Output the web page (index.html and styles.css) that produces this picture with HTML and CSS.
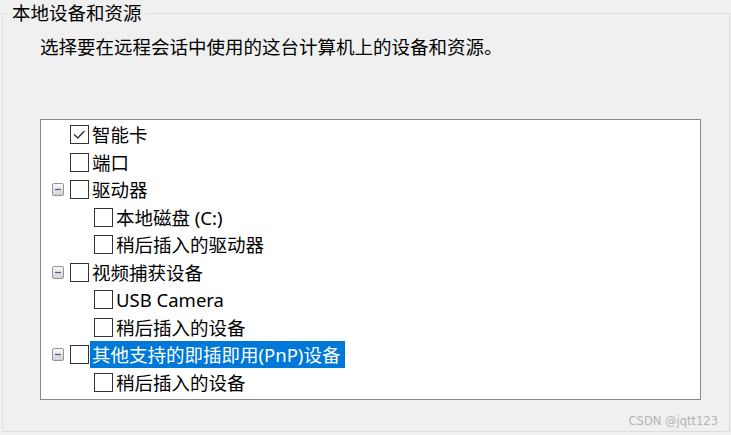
FILE: index.html
```html
<!DOCTYPE html>
<html lang="zh-CN">
<head>
    <meta charset="UTF-8">
    <title>本地设备和资源</title>
    <link rel="stylesheet" href="styles.css">
</head>
<body>
    <fieldset class="group">
        <legend class="group-title">本地设备和资源</legend>
        <p class="desc">选择要在远程会话中使用的这台计算机上的设备和资源。</p>

        <div class="tree">
            <div class="row">
                <span class="expander"></span>
                <span class="check">
                    <svg viewBox="0 0 19 19"><path d="M3.5 9.5L7.5 13.5L15 5.5" fill="none" stroke="#333" stroke-width="1.6"/></svg>
                </span>
                <span class="label">智能卡</span>
            </div>
            <div class="row">
                <span class="expander"></span>
                <span class="check"></span>
                <span class="label">端口</span>
            </div>
            <div class="row">
                <span class="expander">
                    <svg viewBox="0 0 12 13"><defs><linearGradient id="eg1" x1="0" y1="0" x2="0" y2="1"><stop offset="0" stop-color="#fafafa"/><stop offset="1" stop-color="#d0d0d0"/></linearGradient></defs><rect x="0.5" y="0.5" width="11" height="12" rx="1.5" fill="url(#eg1)" stroke="#959595"/><path d="M3 6.5H9" stroke="#4b5f9a" stroke-width="1.3"/></svg>
                </span>
                <span class="check"></span>
                <span class="label">驱动器</span>
            </div>
            <div class="row sub">
                <span class="expander"></span>
                <span class="check"></span>
                <span class="label">本地磁盘 (C:)</span>
            </div>
            <div class="row sub">
                <span class="expander"></span>
                <span class="check"></span>
                <span class="label">稍后插入的驱动器</span>
            </div>
            <div class="row">
                <span class="expander">
                    <svg viewBox="0 0 12 13"><rect x="0.5" y="0.5" width="11" height="12" rx="1.5" fill="url(#eg1)" stroke="#959595"/><path d="M3 6.5H9" stroke="#4b5f9a" stroke-width="1.3"/></svg>
                </span>
                <span class="check"></span>
                <span class="label">视频捕获设备</span>
            </div>
            <div class="row sub">
                <span class="expander"></span>
                <span class="check"></span>
                <span class="label">USB Camera</span>
            </div>
            <div class="row sub">
                <span class="expander"></span>
                <span class="check"></span>
                <span class="label">稍后插入的设备</span>
            </div>
            <div class="row">
                <span class="expander">
                    <svg viewBox="0 0 12 13"><rect x="0.5" y="0.5" width="11" height="12" rx="1.5" fill="url(#eg1)" stroke="#959595"/><path d="M3 6.5H9" stroke="#4b5f9a" stroke-width="1.3"/></svg>
                </span>
                <span class="check"></span>
                <span class="label selected">其他支持的即插即用(PnP)设备</span>
            </div>
            <div class="row sub">
                <span class="expander"></span>
                <span class="check"></span>
                <span class="label">稍后插入的设备</span>
            </div>
        </div>

        <div class="watermark">CSDN @jqtt123</div>
    </fieldset>
</body>
</html>
```

FILE: styles.css
```css
:root {
    --bg: #f0f0f0;
    --group-border: #dcdcdc;
    --list-border: #828790;
    --text: #000000;
    --select: #0078d7;
}

* {
    margin: 0;
    padding: 0;
    box-sizing: border-box;
}

body {
    background: var(--bg);
    color: var(--text);
    font-family: "Noto Sans", "Noto Sans CJK SC", sans-serif;
    font-size: 18.5px;
    width: 731px;
    height: 435px;
    overflow: hidden;
}

.group {
    margin: 0 1px 0 2px;
    height: 432px;
    border: 1px solid var(--group-border);
    padding: 0;
}

.group-title {
    margin-left: 5px;
    padding: 0 4px;
    line-height: 26px;
}

.desc {
    margin: 8px 0 0 37px;
    line-height: 26px;
}

/* liste arborescente */
.tree {
    margin: 59px 0 0 37px;
    width: 661px;
    height: 281px;
    background: #ffffff;
    border: 1px solid var(--list-border);
    padding-top: 1px;
}

.row {
    height: 27.5px;
    display: flex;
    align-items: center;
    padding-left: 11px;
}

.row.sub {
    padding-left: 35px;
}

.expander {
    width: 12px;
    height: 13px;
    margin-right: 6px;
    display: flex;
}

.expander svg {
    width: 12px;
    height: 13px;
}

.check {
    width: 19px;
    height: 19px;
    border: 1px solid #333333;
    background: #ffffff;
    display: flex;
    flex-shrink: 0;
}

.check svg {
    width: 17px;
    height: 17px;
}

.label {
    margin-left: 1px;
    padding: 0 2px;
    line-height: 27px;
    white-space: nowrap;
}

.label.selected {
    padding-right: 5px;
    background: var(--select);
    color: #ffffff;
}

.watermark {
    margin: 14px 11px 0 0;
    text-align: right;
    font-family: "DejaVu Sans", sans-serif;
    font-size: 11.5px;
    line-height: 14px;
    color: #b4b4b4;
}
```
